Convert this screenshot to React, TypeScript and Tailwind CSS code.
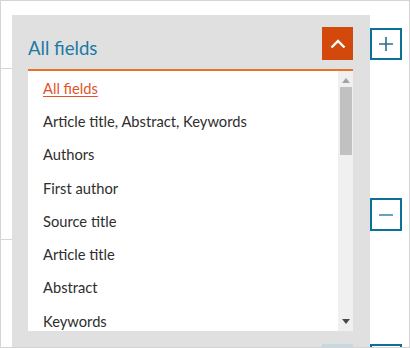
const FIELDS = [
  "All fields",
  "Article title, Abstract, Keywords",
  "Authors",
  "First author",
  "Source title",
  "Article title",
  "Abstract",
  "Keywords",
];

function ChevronUp() {
  return (
    <svg width="16" height="10" viewBox="0 0 16 10" fill="none">
      <path d="M1.5 8.5 L8 2 L14.5 8.5" stroke="#ffffff" strokeWidth="2.4" />
    </svg>
  );
}

function PlusIcon() {
  return (
    <svg width="16" height="16" viewBox="0 0 16 16" fill="none">
      <path d="M8 1 V15 M1 8 H15" stroke="#2b6f8c" strokeWidth="1.6" />
    </svg>
  );
}

function MinusIcon() {
  return (
    <svg width="16" height="16" viewBox="0 0 16 16" fill="none">
      <path d="M1 8 H15" stroke="#3c8db5" strokeWidth="1.6" />
    </svg>
  );
}

export default function App() {
  return (
    <div
      className="w-[410px] h-[348px] flex border border-[#d4d4d4] bg-white overflow-hidden"
      style={{ fontFamily: 'Lato, "Open Sans", sans-serif' }}
    >
      {/* page lines behind the panel */}
      <div className="w-[11px] shrink-0 flex flex-col">
        <div className="mt-[67px] h-px bg-[#d6d6d6]" />
        <div className="mt-[170px] h-px bg-[#d6d6d6]" />
      </div>

      {/* field selector panel */}
      <div className="w-[358px] shrink-0 mt-[14px] bg-[#e0e0e0] flex flex-col pl-4 pr-[17px]">
        <div className="h-[54px] flex justify-between">
          <span className="pt-[21px] text-[18.6px] leading-[24px] text-[#1c7aa6]">All fields</span>
          <button className="mt-[12px] w-[31px] h-[33px] bg-[#d3490c] flex items-center justify-center">
            <ChevronUp />
          </button>
        </div>
        <div className="h-[2px] bg-[#ea7123]" />
        <div className="h-[260px] bg-white flex">
          <ul className="flex-1 pl-[15px]">
            {FIELDS.map((f, i) => (
              <li key={f + i} className="h-[33.3px] flex items-center text-[14.7px]">
                {i === 0 ? (
                  <span className="text-[#e2532b] underline underline-offset-2">{f}</span>
                ) : (
                  <span className="text-[#2e2e2e]">{f}</span>
                )}
              </li>
            ))}
          </ul>
          <div className="w-[15px] bg-[#f0f0f0] flex flex-col items-center">
            <svg className="mt-[7px]" width="8" height="5" viewBox="0 0 8 5">
              <path d="M0 5 L4 0 L8 5 Z" fill="#a3a3a3" />
            </svg>
            <div className="mt-[4px] w-[12px] h-[68px] bg-[#c1c1c1]" />
            <svg className="mt-auto mb-[7px]" width="8" height="5" viewBox="0 0 8 5">
              <path d="M0 0 L8 0 L4 5 Z" fill="#4a4a4a" />
            </svg>
          </div>
        </div>
        <div className="flex-1 flex justify-end items-end">
          <div className="w-[31px] h-[3px] bg-[#c6d8e2]" />
        </div>
      </div>

      {/* add / remove row buttons */}
      <div className="flex-1 flex flex-col">
        <button className="shrink-0 mt-[27px] w-[32px] h-[32px] border-2 border-[#0c7099] flex items-center justify-center">
          <PlusIcon />
        </button>
        <button className="shrink-0 mt-[138px] w-[32px] h-[33px] border-2 border-[#0c7099] flex items-center justify-center">
          <MinusIcon />
        </button>
        <div className="shrink-0 mt-[113px] w-[32px] h-[10px] border-2 border-[#0c7099]" />
      </div>
    </div>
  );
}
